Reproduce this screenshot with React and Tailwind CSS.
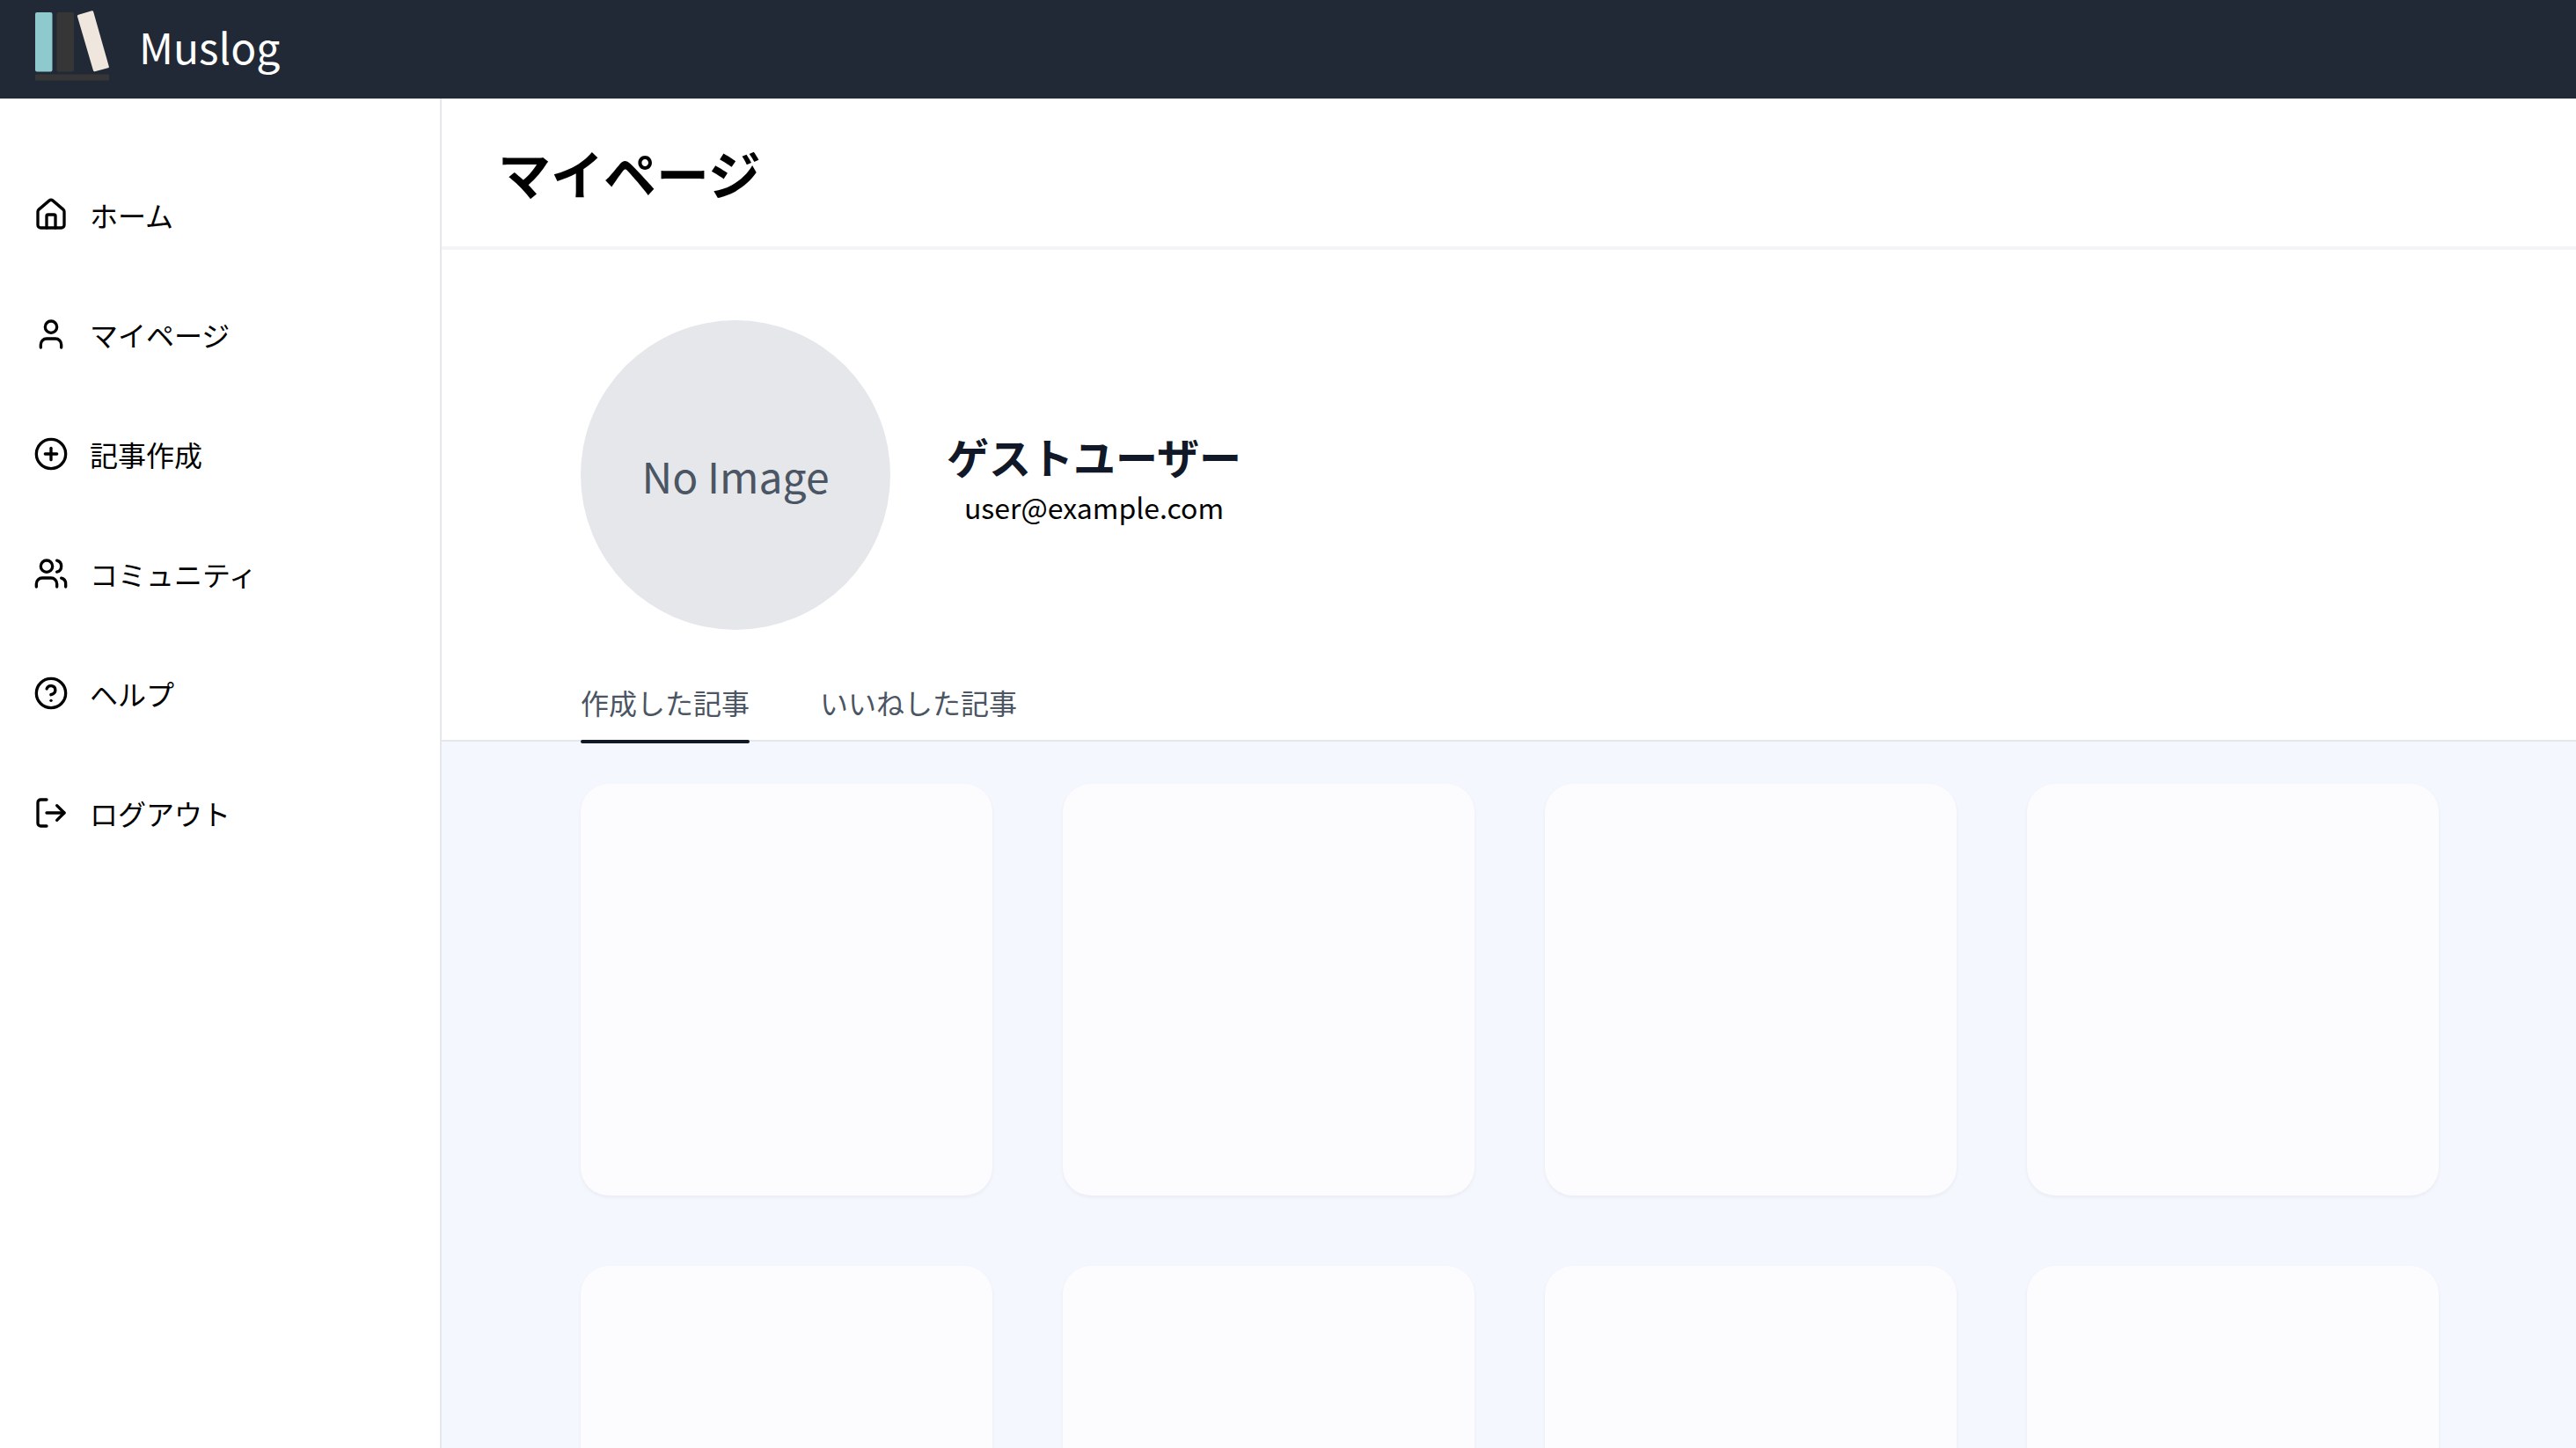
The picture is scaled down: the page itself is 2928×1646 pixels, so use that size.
import { useState } from "react";
import { House, User, CirclePlus, Users, CircleQuestionMark, LogOut } from "lucide-react";

const navItems = [
  { label: "ホーム", icon: House },
  { label: "マイページ", icon: User },
  { label: "記事作成", icon: CirclePlus },
  { label: "コミュニティ", icon: Users },
  { label: "ヘルプ", icon: CircleQuestionMark },
  { label: "ログアウト", icon: LogOut },
];

const tabs = ["作成した記事", "いいねした記事"];
const cards = [1, 2, 3, 4, 5, 6, 7, 8];

function Logo() {
  return (
    <svg className="h-20 w-[84px]" viewBox="0 0 84 80" aria-hidden="true">
      <rect x="0" y="2" width="19.5" height="67.5" rx="2" fill="#8ec9cd" />
      <rect x="24.5" y="2" width="19.5" height="67.5" rx="2" fill="#363636" />
      <path
        d="M49.2 4.8 64.4 0.3Q65.8 0 66.2 1.4L83.8 63.4Q84.1 64.9 82.7 65.3L67.9 69.2Q66.5 69.6 66 68.2L47.9 6.5Q47.7 5.3 49.2 4.8Z"
        fill="#efe7dd"
      />
      <rect x="0" y="72.5" width="84" height="7" rx="1" fill="#363636" />
    </svg>
  );
}

function Header() {
  return (
    <header className="flex h-28 shrink-0 items-center bg-[#222936] px-10 pb-2">
      <a href="#" className="flex items-center gap-[34px] text-5xl text-white">
        <Logo />
        <span>Muslog</span>
      </a>
    </header>
  );
}

function Sidebar() {
  return (
    <aside className="w-[502px] shrink-0 border-r-2 border-[#e5e7eb] px-[38px] pt-[108px]">
      <nav>
        <ul className="flex flex-col gap-[88px]">
          {navItems.map(({ label, icon: Icon }) => (
            <li key={label}>
              <a href="#" className="flex items-center gap-6 text-[32px] leading-[48px]">
                <Icon className="size-10" strokeWidth={2} />
                <span>{label}</span>
              </a>
            </li>
          ))}
        </ul>
      </nav>
    </aside>
  );
}

export default function App() {
  const [active, setActive] = useState(tabs[0]);
  return (
    <div className="flex h-screen flex-col overflow-hidden bg-white font-['Noto_Sans_CJK_JP',sans-serif] text-black">
      <Header />
      <div className="flex min-h-0 flex-1">
        <Sidebar />
        <main className="flex min-w-0 flex-1 flex-col overflow-hidden">
          <div className="shrink-0 border-b-4 border-[#f3f4f6] px-16 py-12">
            <h1 className="text-6xl leading-[72px] font-bold">マイページ</h1>
          </div>
          <section className="flex shrink-0 items-center gap-16 pt-20 pr-[156px] pl-[158px]">
            <div className="flex size-88 items-center justify-center rounded-full bg-[#e5e7eb] text-5xl text-[#4b5563]">
              No Image
            </div>
            <div className="flex flex-col items-center gap-[2px] pt-[6px]">
              <h2 className="text-5xl leading-16 font-bold text-[#111827]">ゲストユーザー</h2>
              <p className="text-[32px] leading-[48px]">user@example.com</p>
            </div>
          </section>
          <div role="tablist" className="mt-14 flex h-[71px] shrink-0 gap-20 border-b-2 border-[#e5e7eb] pr-[156px] pl-[158px]">
            {tabs.map((tab) => (
              <button
                key={tab}
                type="button"
                role="tab"
                aria-selected={active === tab}
                onClick={() => setActive(tab)}
                className="relative pb-[18px] text-[32px] leading-[48px] text-[#4b5563]"
              >
                {tab}
                {active === tab && (
                  <span className="absolute inset-x-0 top-full h-1 rounded-full bg-[#111827]" />
                )}
              </button>
            ))}
          </div>
          <section className="grid flex-1 grid-cols-4 content-start gap-20 bg-[#f4f7fe] pt-12 pr-[156px] pl-[158px]">
            {cards.map((id) => (
              <article key={id} className="aspect-square rounded-[32px] bg-[#fcfcfe] shadow-[0_2px_4px_rgba(0,0,0,0.05)]" />
            ))}
          </section>
        </main>
      </div>
    </div>
  );
}
